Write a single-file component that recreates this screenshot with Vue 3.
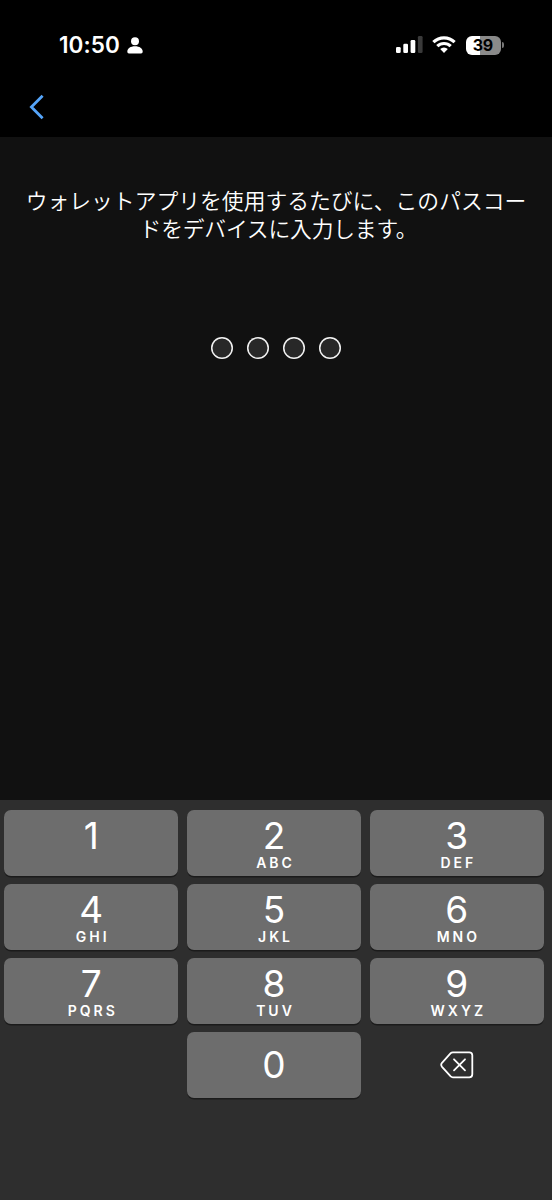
<script setup>
const keys = [
  { digit: '1', letters: '' },
  { digit: '2', letters: 'ABC' },
  { digit: '3', letters: 'DEF' },
  { digit: '4', letters: 'GHI' },
  { digit: '5', letters: 'JKL' },
  { digit: '6', letters: 'MNO' },
  { digit: '7', letters: 'PQRS' },
  { digit: '8', letters: 'TUV' },
  { digit: '9', letters: 'WXYZ' },
]
</script>

<template>
  <div class="screen">
    <header class="top">
      <div class="status">
        <span class="time">10:50</span>
        <svg class="person" width="16" height="17" viewBox="0 0 16 17" fill="#fff">
          <circle cx="8" cy="4.200" r="4" />
          <path d="M.3 14.600C.3 11.300 3.500 9.200 8 9.200s7.700 2.100 7.700 5.400c0 1.200-.6 1.900-1.700 1.900H2C.9 16.500.3 15.800.3 14.600Z" />
        </svg>
        <svg class="signal" width="27" height="17" viewBox="0 0 27 17" fill="#fff">
          <rect x="0" y="11" width="4.700" height="6" rx="1.300" />
          <rect x="7.300" y="7.700" width="4.700" height="9.300" rx="1.300" />
          <rect x="14.600" y="4" width="4.700" height="13" rx="1.300" />
          <rect x="21.900" y="0" width="4.700" height="17" rx="1.300" fill="#3a3a3a" />
        </svg>
        <svg class="wifi" width="24" height="17" viewBox="0 0 24 17" fill="none" stroke="#fff" stroke-width="3.200">
          <path d="M1.400 6.200A15.200 15.200 0 0 1 22.600 6.200" />
          <path d="M5.300 10.200A9.700 9.700 0 0 1 18.700 10.200" />
          <path d="M8.200 13.100A5.500 5.500 0 0 1 15.800 13.100L12 16.900Z" fill="#fff" stroke="none" />
        </svg>
        <div class="battery"><span>39</span></div>
        <i class="battery-tip"></i>
      </div>
      <nav class="nav">
        <svg width="18" height="26" viewBox="0 0 18 26" fill="none" stroke="#55a5fa" stroke-width="2.800">
          <path d="M14.600 1.800 3.400 13 14.600 24.200" />
        </svg>
      </nav>
    </header>

    <main class="content">
      <p class="message">
        <span>ウォレットアプリを使用するたびに、このパスコー</span>
        <span class="second">ドをデバイスに入力します。</span>
      </p>
      <div class="dots">
        <i v-for="n in 4" :key="n" class="dot"></i>
      </div>
    </main>

    <section class="keypad">
      <button v-for="k in keys" :key="k.digit" class="key">
        <span class="digit">{{ k.digit }}</span>
        <span v-if="k.letters" class="letters">{{ k.letters }}</span>
      </button>
      <button class="key zero"><span class="digit">0</span></button>
      <button class="delete">
        <svg width="34" height="28" viewBox="0 0 34 28" fill="none" stroke="#fff" stroke-width="1.800" stroke-linecap="round" stroke-linejoin="round">
          <path d="M12.800 1.300H29.300A3 3 0 0 1 32.300 4.300V23.300A3 3 0 0 1 29.300 26.300H12.800Q11.600 26.300 10.700 25.400L2 15.800Q.4 13.800 2 11.800L10.700 2.200Q11.600 1.300 12.800 1.300Z" />
          <path d="M14 8.300 25 19.300M25 8.300 14 19.300" />
        </svg>
      </button>
    </section>
  </div>
</template>

<style>
html,
body {
  margin: 0;
  background: #111;
}
</style>

<style scoped>
.screen {
  width: 552px;
  height: 1200px;
  display: flex;
  flex-direction: column;
  overflow: hidden;
  background: #111;
  color: #fff;
  font-family: Inter, "Noto Sans CJK JP", sans-serif;
}
.top {
  height: 137px;
  flex: none;
  background: #000;
}
.status {
  height: 90px;
  display: flex;
  align-items: center;
  padding: 0 48px 0 59px;
  box-sizing: border-box;
}
.time {
  width: 62px;
  font-size: 22.500px;
  font-weight: 600;
  line-height: 28px;
  letter-spacing: 0.1px;
  white-space: nowrap;
}
.person {
  margin-left: 6px;
}
.signal {
  margin-left: auto;
  margin-bottom: 1px;
}
.wifi {
  margin-left: 9.500px;
  margin-bottom: 1px;
}
.battery {
  width: 35px;
  height: 19px;
  margin-left: 10px;
  border-radius: 6px;
  background: linear-gradient(to right, #fff 39%, #8a8a8a 39%);
  color: #000;
  font-size: 16px;
  font-weight: 700;
  line-height: 19px;
  letter-spacing: -0.3px;
  text-align: center;
}
.battery span {
  margin-right: 1.500px;
}
.battery-tip {
  width: 2px;
  height: 6px;
  margin-left: 1px;
  border-radius: 0 2px 2px 0;
  background: #777;
}
.nav {
  height: 34px;
  display: flex;
  align-items: center;
  padding-left: 28px;
}
.content {
  height: 663px;
  flex: none;
}
.message {
  display: flex;
  flex-direction: column;
  align-items: center;
  margin: 0;
  padding-top: 49px;
  font-family: "Noto Sans CJK JP", sans-serif;
  font-size: 21.800px;
  font-weight: 350;
  line-height: 27.500px;
  white-space: nowrap;
}
.second {
  padding-left: 5px;
  letter-spacing: -0.2px;
}
.dots {
  display: flex;
  justify-content: center;
  gap: 13.700px;
  margin-top: 96px;
}
.dot {
  width: 22px;
  height: 22px;
  border-radius: 50%;
  background: #282828;
  box-shadow: inset 0 0 0 1.500px #f2f2f2;
}
.keypad {
  flex: 1;
  display: grid;
  grid-template-columns: repeat(3, 1fr);
  grid-auto-rows: 66px;
  gap: 8px 8.400px;
  padding: 10px 8px 0 4px;
  background: #2e2e2e;
}
button {
  border: 0;
  margin: 0;
  padding: 0;
  color: inherit;
  font: inherit;
}
.key {
  display: flex;
  flex-direction: column;
  align-items: center;
  border-radius: 7px;
  background: #6d6d6d;
  box-shadow: 0 1.500px 0 #1b1b1b;
}
.digit {
  height: 41px;
  padding-top: 5px;
  font-size: 37px;
  font-weight: 400;
  line-height: 41px;
}
.letters {
  height: 14px;
  font-size: 14px;
  font-weight: 600;
  line-height: 14px;
  letter-spacing: 3px;
  margin-right: -3px;
}
.zero {
  grid-column: 2;
  justify-content: center;
}
.zero .digit {
  padding: 0 0 2px;
}
.delete {
  display: flex;
  align-items: center;
  justify-content: center;
  background: none;
}
</style>
